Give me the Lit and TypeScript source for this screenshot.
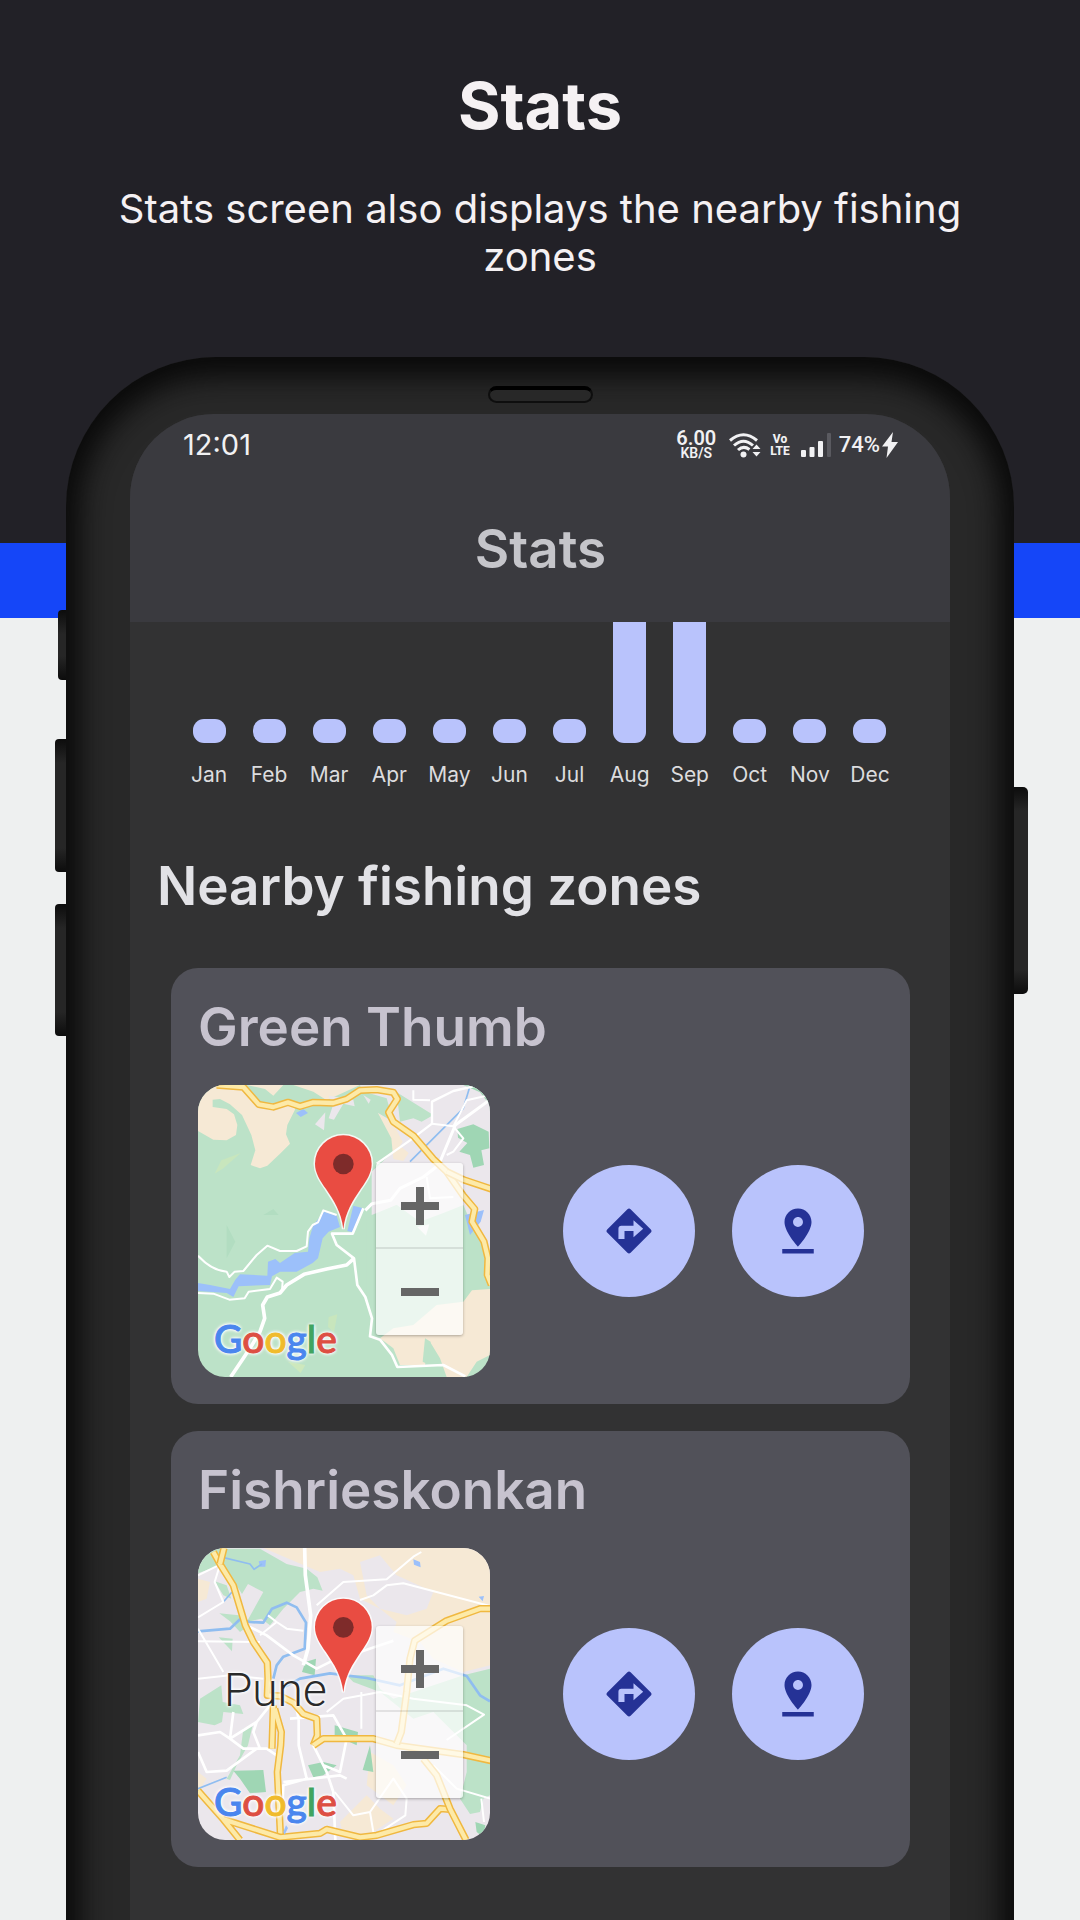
import { LitElement, html, css, svg } from "lit";
import { customElement, property } from "lit/decorators.js";

const INTER = css`Inter, "Open Sans", "Liberation Sans", sans-serif`;

/* Road strokes: casing first, lighter core on top. */
const highway = (d: string) => svg`
  <path d=${d} fill="none" stroke="#f0b840" stroke-width="22" stroke-linejoin="round" />
  <path d=${d} fill="none" stroke="#fdeaa8" stroke-width="13" stroke-linejoin="round" />`;
const road = (d: string, w = 7) => svg`
  <path d=${d} fill="none" stroke="#ffffff" stroke-width=${w} stroke-linejoin="round" />`;
const area = (d: string, fill: string) => svg`<path d=${d} fill=${fill} />`;
const river = (d: string, w = 6) => svg`
  <path d=${d} fill="none" stroke="#8fbdf0" stroke-width=${w} stroke-linejoin="round" />`;

const LAND = "#f6e9d5";
const FOREST = "#bce2c8";
const PARK = "#9fd6b4";
const CITY = "#ebe7ec";
const WATER = "#9cc0fa";

const hillsMap = svg`
  <rect x="54" y="40" width="876" height="876" fill=${FOREST} />
  ${area("M54 40H195L230 98 330 92 346 112 322 160 318 188 330 216 300 246 262 282 240 290 212 280 226 236 214 190 186 130 150 98 120 82 98 84 98 106 140 112 162 128 172 160 168 190 140 206 100 204 54 178Z", LAND)}
  ${area("M200 40H310L280 72 255 52Z", LAND)}
  ${area("M340 40H540L440 86 400 60Z", LAND)}
  ${area("M540 40H930V660L900 520 880 470 850 400 800 420 740 480 700 440 650 400 575 430 575 300 640 240 640 200 620 160 594 124 640 150 620 80 545 58Z", CITY)}
  ${area("M594 124L640 158 668 210 660 222 686 244 670 268 640 262 634 200Z", LAND)}
  ${area("M650 62L760 130 725 150 700 140 660 150Z", FOREST)}
  ${area("M850 40H880L930 66V100L900 62Z", PARK)}
  ${area("M832 172L880 158 926 180 928 230 904 236 912 280 880 288 870 250 838 240 862 214 834 198Z", PARK)}
  ${area("M560 440L650 400 720 450 800 420 860 440 900 500 930 540V660L870 660 850 700 760 700 600 740 560 700Z", FOREST)}
  ${area("M712 466L748 458 738 492Z", "#f0f2f0")}
  ${area("M855 430L912 415 902 450 870 490Z", WATER)}
  ${area("M600 800L640 770 700 760 770 700 850 690 876 656 930 652V850L890 870 860 916H800L780 860 750 810 735 880 660 880 640 830Z", LAND)}
  ${area("M735 800L752 810 740 876 728 870Z", FOREST)}
  ${area("M405 158L436 122 432 176Z", CITY)}
  ${area("M446 72L520 84 524 104 490 96 462 144 446 140 458 104Z", CITY)}
  ${area("M550 70L572 84 566 96Z", CITY)}
  ${area("M348 124L370 112 384 124 362 136Z", WATER)}
  ${area("M104 306L124 266 182 244 130 290Z", "#c8e6bd")}
  ${area("M324 870L376 880 362 904Z", "#cde8bd")}
  ${area("M446 736L472 728 462 782 444 766Z", "#c8e6bd")}
  ${area("M140 460L166 510 140 560ZM250 430L280 412 296 430Z", "#b2ddc1")}
  ${area("M54 634L90 640 150 652 166 624 180 608 262 612 264 570 286 562 300 574 344 544 384 540 388 500 400 460 432 420 470 432 480 466 446 480 428 500 414 560 398 574 350 600 300 600 276 614 270 640 210 642 176 644 160 676 140 664 54 658Z", WATER)}
  ${area("M520 402L550 410 518 482 502 478Z", WATER)}
  ${river("M868 50L850 110 760 200 690 270", 5)}
  ${road("M54 552C80 580 110 598 140 600L148 616 164 600 190 598 230 550 262 522 300 538 350 538 380 524 384 480 398 460 414 452 430 416 470 430", 6)}
  ${road("M54 664L100 666 148 684 194 680 206 660 270 652 290 618 308 630 306 656", 6)}
  ${road("M152 916L190 860 216 820 240 780 254 740 248 700 262 676 300 664 320 640 372 608 440 592 500 580 522 560", 11)}
  ${road("M550 410L518 486 456 486 470 520 522 560 532 640 556 676 576 740 570 794 600 804 636 850 652 886 790 880 856 914", 8)}
  ${road("M556 416L576 396 632 386 660 350 730 316 776 280 826 160 930 84", 9)}
  ${road("M590 276L690 206 756 156 756 90 820 58 880 44", 7)}
  ${road("M756 156L820 164 860 86 930 70M700 56L700 84 750 86M820 164L850 200 820 240 800 250M740 316L750 380 820 376", 6)}
  ${highway("M110 40L190 46 236 98 280 106 324 92 360 104 400 92 460 94 500 82 540 56 590 54 640 62 652 82 626 122 640 150 700 192 760 262 800 300 850 372 884 412 876 450 912 510 924 560 922 610 934 640")}
  ${highway("M800 300L850 324 934 352")}`;

const cityMap = svg`
  <rect x="54" y="48" width="876" height="876" fill=${CITY} />
  ${area("M250 48H930V400L850 420 760 380 720 330 640 300 650 270 600 230 540 200 520 130 480 110 420 120Z", LAND)}
  ${area("M540 90L600 70 650 130 760 180 740 230 680 250 600 230 560 190Z", CITY)}
  ${area("M54 140L90 150 80 200 54 210ZM54 720L80 740 54 780ZM480 870L560 790 600 830 640 860 580 900 490 910Z", LAND)}
  ${area("M570 660L640 700 680 760 640 820 600 790 560 760Z", LAND)}
  ${area("M54 90L100 50H240L320 96 380 110 412 136 428 176 400 170 360 180 310 230 270 280 244 260 200 270 250 180 204 156 186 186 150 130 120 100 54 124Z", FOREST)}
  ${area("M104 148L140 160 154 200 130 190ZM118 244L176 250 202 284 180 300 150 268ZM116 316L158 320 156 358Z", FOREST)}
  ${area("M60 500L124 460 128 510 180 520 190 546 130 540 126 570 104 580 54 570Z", FOREST)}
  ${area("M190 590L218 580 204 640 170 700 150 744 140 740 180 670Z", FOREST)}
  ${area("M160 716L250 714 258 780 210 784 180 740ZM384 700L430 690 470 700 430 730 400 736Z", PARK)}
  ${area("M376 390L408 380 404 430 366 420ZM464 580L534 600 530 640 464 610ZM570 640L580 720 548 714Z", PARK)}
  ${area("M500 430L580 430 600 470 640 500 700 480 850 430 930 410V790L910 800 900 840 870 846 840 800 860 720 860 640 760 540 700 560 600 480 520 450Z", FOREST)}
  ${area("M886 870L916 880 910 916 890 900Z", PARK)}
  ${area("M700 82L720 90 722 106 702 98ZM236 88L258 84 256 104 240 104ZM896 194L912 192 908 208Z", WATER)}
  ${river("M128 76L210 96 222 112 246 96", 5)}
  ${river("M54 298L150 290 180 262 210 270 250 272 276 230 320 212 350 226 378 272 374 350 310 374 290 400 280 440", 8)}
  ${river("M130 210L156 180M54 770L140 736", 5)}
  ${river("M316 464L360 440 450 424 560 438 660 460 790 410 860 432 900 490 930 508", 8)}
  ${road("M374 48L376 130 392 250 384 350 370 400", 11)}
  ${road("M54 130L120 98 104 150 130 210 54 256M54 290L130 420M54 328L240 330M54 440L150 430 250 440", 6)}
  ${road("M200 280L260 310 340 370 410 410 470 380 540 360 640 326", 8)}
  ${road("M240 310L290 270 320 290 370 296M290 270L264 250M410 220L490 150 620 142 700 74 724 60M540 204L580 190 620 160 670 154 930 222", 6)}
  ${road("M54 610L120 600 150 620 230 570 270 520M160 540L150 620 190 650 260 650 290 670M230 570L220 600 240 650M54 660L80 720 140 716 230 650", 8)}
  ${road("M345 510L356 560 356 640 380 740 310 760 306 840M400 640L440 720 460 780 466 924M330 560L460 550 500 620 480 720 430 700M310 750L480 730 500 740", 8)}
  ${road("M440 540L490 500 600 480 700 500 860 520 912 548 800 624M544 480L544 590M464 780L520 850 570 840 640 740 680 800 676 850 600 900M570 840L580 900", 6)}
  ${road("M760 700L830 770 930 800M904 800L912 870", 6)}
  ${highway("M100 60L120 96 160 160 196 280 220 330 262 392 264 440 262 490 300 492 340 512 370 546 410 560 412 610 400 640")}
  ${highway("M132 48L120 96M400 640L430 620 580 620 650 640 850 668 934 686")}
  ${highway("M934 230L900 230 800 266 704 326 690 380 680 480 664 600 650 636")}
  ${highway("M280 520L276 650M284 530L304 600 302 640 292 720 302 924")}
  ${highway("M54 776L130 862 180 924M130 862L300 916 420 904 440 892 540 916 590 910 700 878 740 874 780 830 810 832")}
  ${highway("M730 680L770 730 810 830 858 924")}
  ${area("M310 900L318 880 324 888 314 908Z", WATER)}`;

@customElement("zone-card")
class ZoneCard extends LitElement {
  @property() name = "";
  @property() kind = "hills";
  @property() place = "";

  static styles = css`
    :host { display: block; }
    .card {
      background: #515159;
      border-radius: 27px;
      padding: 27px 46px 27px 27px;
    }
    .name {
      margin: 0;
      font: 600 53px/64px ${INTER};
      color: #c7c3cf;
    }
    .row {
      display: flex;
      justify-content: space-between;
      align-items: center;
      margin-top: 26px;
    }
    .map {
      position: relative;
      width: 292px;
      height: 292px;
      border-radius: 27px;
      overflow: hidden;
    }
    .tiles { display: block; width: 100%; height: 100%; }
    .zoom {
      position: absolute;
      top: 78px;
      right: 27px;
      width: 87px;
      display: grid;
      background: rgba(255, 255, 255, 0.7);
      border-radius: 3px;
      box-shadow: 0 1px 3px rgba(0, 0, 0, 0.3);
    }
    .zoom button {
      height: 86px;
      padding: 0;
      border: 0;
      background: none;
      display: grid;
      place-items: center;
    }
    .zoom button + button { box-shadow: 0 -2px 0 rgba(0, 0, 0, 0.09); }
    .zoom svg { width: 38px; height: 38px; }
    .google {
      position: absolute;
      left: 16px;
      bottom: 15px;
      font: 500 39px/48px Lato, "Liberation Sans", sans-serif;
      -webkit-text-stroke: 1px currentColor;
      text-shadow: 0 0 3px #fff, 0 0 3px #fff, 0 0 4px #fff, 0 0 4px #fff;
    }
    .b { color: #4a86ee; }
    .r { color: #dd4f43; }
    .y { color: #f0bb2c; }
    .g { color: #40a460; }
    .place {
      position: absolute;
      left: 26px;
      top: 115px;
      font: 300 46px/54px Roboto, "Liberation Sans", sans-serif;
      color: #2a2a2a;
      text-shadow: 0 0 3px #fff, 0 0 3px #fff, 0 0 4px #fff;
    }
    .actions { display: flex; gap: 37px; }
    .action {
      width: 132px;
      height: 132px;
      padding: 0;
      border: 0;
      border-radius: 50%;
      background: #b9c3fc;
      display: grid;
      place-items: center;
    }
    .action svg { width: 54px; height: 54px; fill: #253296; }
  `;

  render() {
    const hills = this.kind === "hills";
    return html`
      <article class="card">
        <h3 class="name">${this.name}</h3>
        <div class="row">
          <div class="map">
            <svg class="tiles" viewBox=${hills ? "54 40 876 876" : "54 48 876 876"} aria-hidden="true">
              ${hills ? hillsMap : cityMap}
              <g transform=${hills ? "translate(0 0)" : "translate(0 9)"}>
                <path
                  d="M490 472C484 420 462 388 438 352C420 326 405 304 405 276A85 85 0 0 1 575 276C575 304 560 326 542 352C518 388 496 420 490 472Z"
                  fill="#e94c42" stroke="#ffffff" stroke-opacity=".8" stroke-width="9" paint-order="stroke" />
                <circle cx="490" cy="277" r="31" fill="#7e2b2a" />
              </g>
            </svg>
            ${this.place ? html`<span class="place">${this.place}</span>` : ""}
            <span class="google"><span class="b">G</span><span class="r">o</span><span class="y">o</span><span class="b">g</span><span class="g">l</span><span class="r">e</span></span>
            <div class="zoom">
              <button type="button" aria-label="Zoom in">
                <svg viewBox="0 0 38 38"><path d="M15 0h8v15h15v8H23v15h-8V23H0v-8h15z" fill="#666" /></svg>
              </button>
              <button type="button" aria-label="Zoom out">
                <svg viewBox="0 0 38 38"><path d="M0 15h38v8H0z" fill="#666" /></svg>
              </button>
            </div>
          </div>
          <div class="actions">
            <button class="action" type="button" aria-label="Directions">
              <svg viewBox="0 0 24 24"><path d="M21.71 11.29l-9-9c-.39-.39-1.02-.39-1.41 0l-9 9c-.39.39-.39 1.02 0 1.41l9 9c.39.39 1.02.39 1.41 0l9-9c.39-.38.39-1.01 0-1.41zM14 14.5V12h-4v3.500H7.300V11c0-.75.45-1.300 1.300-1.300H14V7.200l4.300 3.800-4.300 3.800z" /></svg>
            </button>
            <button class="action" type="button" aria-label="Show location">
              <svg viewBox="0 0 24 24"><path d="M18 8c0-3.31-2.69-6-6-6S6 4.69 6 8c0 4.5 6 11 6 11s6-6.5 6-11zm-8.2 0c0-1.2 1-2.2 2.2-2.2s2.2 1 2.2 2.2-1 2.2-2.2 2.2-2.2-1-2.2-2.2zM5 20v2h14v-2H5z" /></svg>
            </button>
          </div>
        </div>
      </article>
    `;
  }
}

const MONTHS: [string, number][] = [
  ["Jan", 24], ["Feb", 24], ["Mar", 24], ["Apr", 24], ["May", 24], ["Jun", 24],
  ["Jul", 24], ["Aug", 240], ["Sep", 240], ["Oct", 24], ["Nov", 24], ["Dec", 24],
];

@customElement("app-root")
class AppRoot extends LitElement {
  static styles = css`
    :host { display: block; }
    .page {
      min-height: 100vh;
      box-sizing: border-box;
      overflow: hidden;
      display: flex;
      flex-direction: column;
      background: linear-gradient(#222127 543px, #1546f8 543px 618px, #eef0f0 618px);
      font-family: ${INTER};
    }
    .intro {
      padding: 66px 96px 0;
      text-align: center;
      color: #f5f1f3;
    }
    .title { margin: 0; font-size: 65px; line-height: 80px; font-weight: 700; }
    .lead { margin: 39px 0 0; font-size: 40px; line-height: 48px; font-weight: 400; }
    .phone {
      position: relative;
      flex: 1;
      display: flex;
      flex-direction: column;
      margin: 76px 66px -60px;
    }
    .key {
      position: absolute;
      background: linear-gradient(#0c0c0c, #262626 24px calc(100% - 24px), #0c0c0c);
    }
    .left { right: 100%; width: 11px; border-radius: 4px 0 0 4px; }
    .right { left: 100%; width: 14px; border-radius: 0 5px 5px 0; }
    .mute { top: 253px; width: 8px; height: 70px; }
    .up { top: 382px; height: 133px; }
    .down { top: 547px; height: 132px; }
    .power { top: 430px; height: 207px; }
    .frame {
      flex: 1;
      display: flex;
      flex-direction: column;
      padding: 29px 64px 0;
      border-radius: 150px 150px 0 0;
      background: #282828;
      box-shadow: inset 0 6px 28px 14px #0a0a0a;
    }
    .speaker {
      align-self: center;
      width: 105px;
      height: 17px;
      box-sizing: border-box;
      border: 2px solid #0e0e0e;
      border-top: 4px solid #000;
      border-radius: 9px;
      background: #282828;
    }
    .screen {
      flex: 1;
      margin-top: 11px;
      border-radius: 84px 84px 0 0;
      overflow: hidden;
      background: #323233;
    }
    .top {
      background: #3a3a3f;
      padding: 15px 52px 45px 53px;
      color: #f1f1f3;
    }
    .status { display: flex; align-items: center; height: 32px; }
    .clock { flex: 1; font-size: 29px; line-height: 32px; font-weight: 400; }
    .speed, .volte, .battery { font-family: Roboto, "Liberation Sans", sans-serif; }
    .speed, .volte { display: grid; justify-items: center; }
    .speed { font-size: 20px; line-height: 17px; font-weight: 600; }
    .speed small { font-size: 14px; line-height: 13px; }
    .wifi { width: 32px; height: 26px; margin-left: 13px; }
    .volte { margin-left: 9px; font-size: 12px; line-height: 12px; font-weight: 800; }
    .signal { width: 30px; height: 24px; margin-left: 11px; }
    .battery { margin-left: 8px; font-size: 22px; line-height: 32px; font-weight: 500; }
    .bolt { width: 16px; height: 26px; margin-left: 2px; }
    .screen-title {
      margin: 60px 0 0;
      font-size: 53px;
      line-height: 56px;
      font-weight: 600;
      color: #c5c5ca;
      text-align: center;
    }
    .chart {
      display: grid;
      grid-template-columns: repeat(12, 1fr);
      margin: 0;
      padding: 0 50px 0 49px;
      list-style: none;
    }
    .month { display: grid; justify-items: center; }
    .track {
      height: 121px;
      overflow: hidden;
      display: flex;
      align-items: flex-end;
    }
    .bar { width: 33px; flex: none; border-radius: 11px; background: #b9c3fc; }
    .label { margin-top: 20px; font-size: 21px; line-height: 24px; color: #dcdcde; }
    .section {
      margin: 67px 0 0;
      padding: 0 27px;
      font-size: 53px;
      line-height: 64px;
      font-weight: 600;
      color: #e2e2e6;
    }
    .zones { display: grid; gap: 27px; padding: 50px 40px 114px 41px; }
  `;

  render() {
    return html`
      <main class="page">
        <header class="intro">
          <h1 class="title">Stats</h1>
          <p class="lead">Stats screen also displays the nearby fishing zones</p>
        </header>
        <section class="phone">
          <span class="key left mute"></span>
          <span class="key left up"></span>
          <span class="key left down"></span>
          <span class="key right power"></span>
          <div class="frame">
            <div class="speaker"></div>
            <div class="screen">
              <header class="top">
                <div class="status">
                  <time class="clock">12:01</time>
                  <span class="speed"><span>6.00</span><small>KB/S</small></span>
                  <svg class="wifi" viewBox="0 0 32 26" fill="none" stroke="#f1f1f3" stroke-width="3" aria-hidden="true">
                    <path d="M1 8.500Q14.500 -3 28 8.500M5 13.500Q14.500 5 24 13.500M9 18Q14.500 13 20.500 17.500" />
                    <circle cx="14.500" cy="22.500" r="3" fill="#f1f1f3" stroke="none" />
                    <path d="M23.500 17L27.500 12.500 31.500 17ZM23.500 20L27.500 24.500 31.500 20Z" fill="#f1f1f3" stroke="none" />
                  </svg>
                  <span class="volte"><span>Vo</span><span>LTE</span></span>
                  <svg class="signal" viewBox="0 0 30 24" fill="#f1f1f3" aria-hidden="true">
                    <rect x="0" y="17" width="5" height="7" rx="1" />
                    <rect x="8.500" y="14" width="5" height="10" rx="1" />
                    <rect x="17" y="8" width="5" height="16" rx="1" />
                    <rect x="26" y="0" width="4" height="24" rx="1" fill="#5a5a60" />
                  </svg>
                  <span class="battery">74%</span>
                  <svg class="bolt" viewBox="0 0 16 26" aria-hidden="true">
                    <path d="M11 0L0 14.500H6L4.500 26 16 10H9.500Z" fill="#f1f1f3" />
                  </svg>
                </div>
                <h2 class="screen-title">Stats</h2>
              </header>
              <ul class="chart">
                ${MONTHS.map(([label, h]) => html`
                  <li class="month">
                    <div class="track"><div class="bar" style="height:${h}px"></div></div>
                    <span class="label">${label}</span>
                  </li>`)}
              </ul>
              <h2 class="section">Nearby fishing zones</h2>
              <div class="zones">
                <zone-card name="Green Thumb" kind="hills"></zone-card>
                <zone-card name="Fishrieskonkan" kind="city" place="Pune"></zone-card>
              </div>
            </div>
          </div>
        </section>
      </main>
    `;
  }
}
